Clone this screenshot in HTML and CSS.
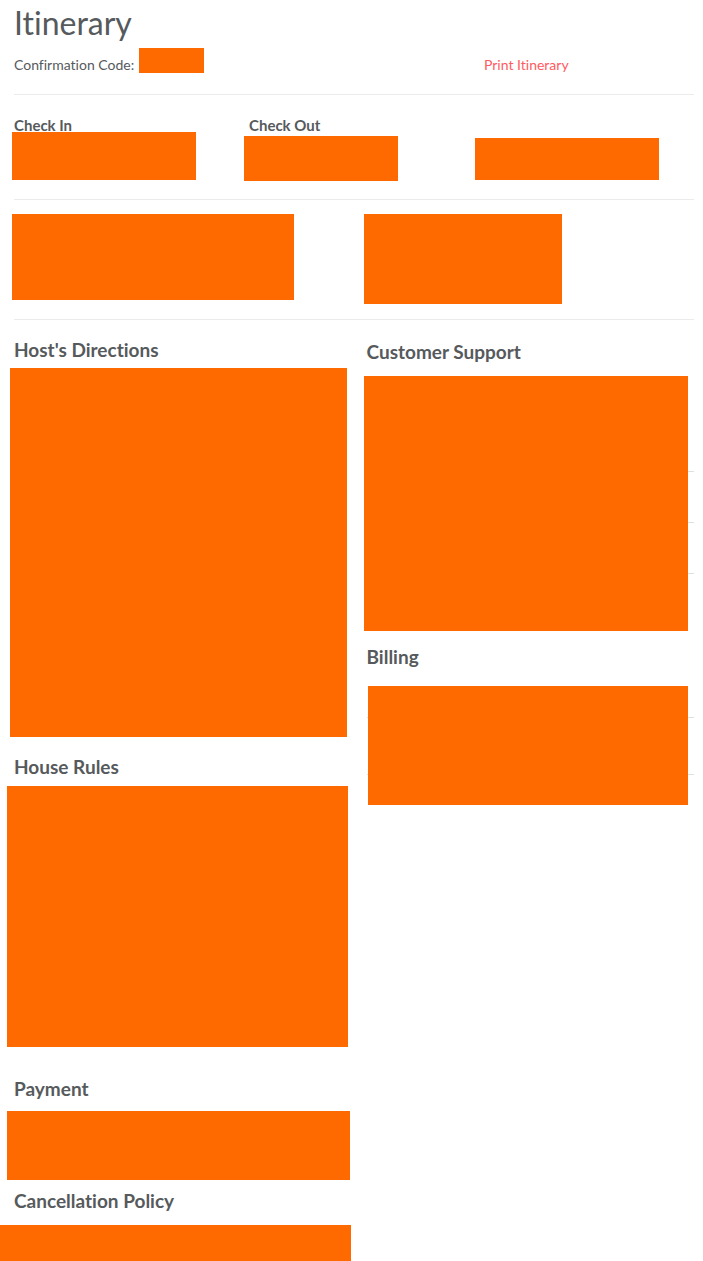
FILE: index.html
```html
<!DOCTYPE html>
<html lang="en">
<head>
<meta charset="utf-8">
<meta name="viewport" content="width=device-width, initial-scale=1">
<title>Itinerary</title>
<link rel="stylesheet" href="styles.css">
</head>
<body>
<main class="page">
  <header class="section intro">
    <h1 class="title">Itinerary</h1>
    <div class="thirds">
      <p class="code"><span class="code-label">Confirmation Code:</span><span class="block code-block"></span></p>
      <a class="print" href="#">Print Itinerary</a>
    </div>
  </header>
  <section class="section thirds dates">
    <div><h2 class="label">Check In</h2><div class="block check-in"></div></div>
    <div><h2 class="label">Check Out</h2><div class="block check-out"></div></div>
    <div><div class="block guests"></div></div>
  </section>
  <section class="section halves listing">
    <div class="block address"></div>
    <div class="block host"></div>
  </section>
  <div class="halves">
    <div>
      <section class="directions">
        <h2 class="heading">Host's Directions</h2>
        <div class="block directions-block"></div>
      </section>
      <section class="rules">
        <h2 class="heading">House Rules</h2>
        <div class="block rules-block"></div>
      </section>
      <section class="payment">
        <h2 class="heading">Payment</h2>
        <div class="block payment-block"></div>
      </section>
      <section class="policy">
        <h2 class="heading">Cancellation Policy</h2>
        <div class="block policy-block"></div>
      </section>
    </div>
    <div>
      <section class="support">
        <h2 class="heading">Customer Support</h2>
        <div class="covered">
          <div class="row row-intro"></div>
          <div class="row row-link"></div>
          <div class="row row-link"></div>
          <div class="row row-last"></div>
          <div class="block cover support-cover"></div>
        </div>
      </section>
      <section class="billing">
        <h2 class="heading">Billing</h2>
        <div class="covered">
          <div class="row row-nights"></div>
          <div class="row row-total"></div>
          <div class="row row-end"></div>
          <div class="block cover billing-cover"></div>
        </div>
      </section>
    </div>
  </div>
</main>
</body>
</html>
```

FILE: styles.css
```css
* { box-sizing: border-box; }

body {
  margin: 0;
  background: #fff;
  color: #565a5c;
  font: 14px/20px Lato, "Liberation Sans", sans-serif;
  font-variant-ligatures: none;
}

h1, h2, p { margin: 0; }

.page { padding: 0 9px 0 14px; }
.section { border-bottom: 1px solid #ebebeb; }
.thirds { display: grid; grid-template-columns: repeat(3, minmax(0, 1fr)); column-gap: 25px; }
.halves { display: grid; grid-template-columns: repeat(2, minmax(0, 1fr)); column-gap: 25px; }
.block { background: #ff6a00; }

.intro { padding: 3px 0 19px; }
.title { font-size: 32px; line-height: 40px; font-weight: 400; }
.intro .thirds { padding-top: 5px; align-items: start; }
.code { display: flex; grid-column: span 2; line-height: 34px; height: 27px; }
.code-label { min-width: 125px; }
.code-block { width: 65px; height: 25px; }
.print { color: #ff5a5f; text-decoration: none; line-height: 34px; height: 27px; }

.dates { padding: 20px 0 18px; }
.label { font-size: 15px; line-height: 20px; font-weight: 700; }
.check-in { width: 184px; height: 48px; margin: -3px 0 0 -2px; }
.check-out { width: 154px; height: 45px; margin: 1px 0 0 -5px; }
.guests { width: 184px; height: 42px; margin: 23px 0 0 -9px; }

.listing { padding: 14px 0 15px; }
.address { width: 282px; height: 86px; margin-left: -2px; }
.host { width: 198px; height: 90px; margin-left: -3px; }

.heading { font-size: 19px; line-height: 24px; font-weight: 700; }

.directions { padding-top: 18px; }
.directions-block { height: 369px; margin: 6px -5px 0 -4px; }
.rules { padding-top: 18px; }
.rules-block { height: 261px; margin: 7px -6px 0 -7px; }
.payment { padding-top: 30px; }
.payment-block { height: 69px; margin: 10px -8px 0 -7px; }
.policy { padding-top: 9px; }
.policy-block { height: 36px; margin: 12px -9px 0 -14px; }

.covered { position: relative; }
.cover { position: absolute; inset: 0 6px 0 0; }
.row + .row { border-top: 1px solid #dce0e0; }

.support { padding-top: 20px; }
.support .covered { margin-top: 12px; }
.row-intro { height: 95px; }
.row-link { height: 51px; }
.row-last { height: 58px; }
.support-cover { left: -3px; }

.billing { padding-top: 14px; }
.billing .covered { margin-top: 17px; }
.row-nights { height: 31px; }
.row-total { height: 57px; }
.row-end { height: 31px; }
.billing-cover { left: 1px; }
```
